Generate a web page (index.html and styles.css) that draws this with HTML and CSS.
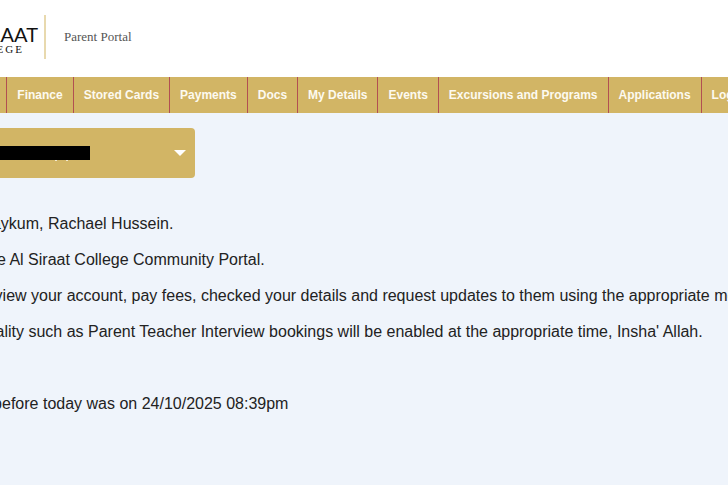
FILE: index.html
```html
<!DOCTYPE html>
<html lang="en">
<head>
    <meta charset="UTF-8">
    <meta name="viewport" content="width=device-width, initial-scale=1.0">
    <title>Parent Portal</title>
    <link rel="stylesheet" href="styles.css">
</head>
<body>
    <div class="page">
        <header class="top">
            <div class="logo">
                <div class="logo-name">AL SIRAAT</div>
                <div class="logo-sub">COLLEGE</div>
            </div>
            <div class="portal">Parent Portal</div>
        </header>

        <nav class="menu">
            <a href="#">Home</a>
            <a href="#">Finance</a>
            <a href="#">Stored Cards</a>
            <a href="#">Payments</a>
            <a href="#">Docs</a>
            <a href="#">My Details</a>
            <a href="#">Events</a>
            <a href="#">Excursions and Programs</a>
            <a href="#">Applications</a>
            <a href="#">Logout</a>
        </nav>

        <main class="content">
            <div class="picker">
                <div class="picker-name"></div>
                <div class="caret"></div>
            </div>
            <p>Assalaamu Alaykum, Rachael Hussein.</p>
            <p>Welcome to the Al Siraat College Community Portal.</p>
            <p>Here you can view your account, pay fees, checked your details and request updates to them using the appropriate menu options.</p>
            <p>Other functionality such as Parent Teacher Interview bookings will be enabled at the appropriate time, Insha' Allah.</p>
            <p class="last">Your last visit before today was on 24/10/2025 08:39pm</p>
        </main>
    </div>
</body>
</html>
```

FILE: styles.css
```css
html, body {
    margin: 0;
    height: 100%;
    overflow: hidden;
}

body {
    font-family: "Liberation Sans", Arial, sans-serif;
    background-color: #eff4fb;
}

.page {
    margin-left: -120px;
    width: 1000px;
}

.top {
    background-color: #fff;
    height: 77px;
    box-sizing: border-box;
    padding-bottom: 3px;
    display: flex;
    align-items: center;
}

.logo {
    width: 166px;
    height: 44px;
    box-sizing: border-box;
    border-right: 2px solid #e8d9ae;
    padding: 10px 6px 0 0;
    color: #111;
}

.logo-name {
    font-family: "Lato", sans-serif;
    font-size: 20px;
    line-height: 19px;
    text-align: right;
}

.logo-sub {
    font-family: "Liberation Serif", serif;
    font-size: 11px;
    letter-spacing: 2px;
    line-height: 10px;
    text-align: right;
    padding-right: 14px;
}

.portal {
    font-family: "Liberation Serif", serif;
    font-size: 13px;
    color: #555;
    margin-left: 18px;
}

.menu {
    background-color: #d2b565;
    height: 36px;
    padding-left: 73px;
    display: flex;
}

.menu a {
    color: #fdfaf0;
    font-size: 12px;
    font-weight: bold;
    text-decoration: none;
    line-height: 36px;
    padding: 0 10px;
    border-right: 1px solid #b24f52;
}

.content {
    padding: 15px 0 0 0;
    font-size: 16px;
    color: #222;
}

.picker {
    width: 315px;
    height: 50px;
    background-color: #d2b565;
    border-radius: 4px;
    display: flex;
    align-items: center;
    justify-content: space-between;
    margin-bottom: 37px;
}

.picker-name {
    position: relative;
    width: 210px;
    height: 14px;
    background-color: #000;
}

/* bits of the name that stick out under the black bar */
.picker-name::after {
    content: "";
    position: absolute;
    left: 175px;
    top: 14px;
    width: 2px;
    height: 1px;
    background-color: #f3ead0;
    box-shadow: 11px 0 0 #f3ead0;
}

.caret {
    width: 0;
    height: 0;
    border-left: 6px solid transparent;
    border-right: 6px solid transparent;
    border-top: 6px solid #fff;
    margin-right: 9px;
}

p {
    margin: 0 0 18px 15px;
    line-height: 18px;
    white-space: nowrap;
}

p.last {
    margin-top: 54px;
}
```
